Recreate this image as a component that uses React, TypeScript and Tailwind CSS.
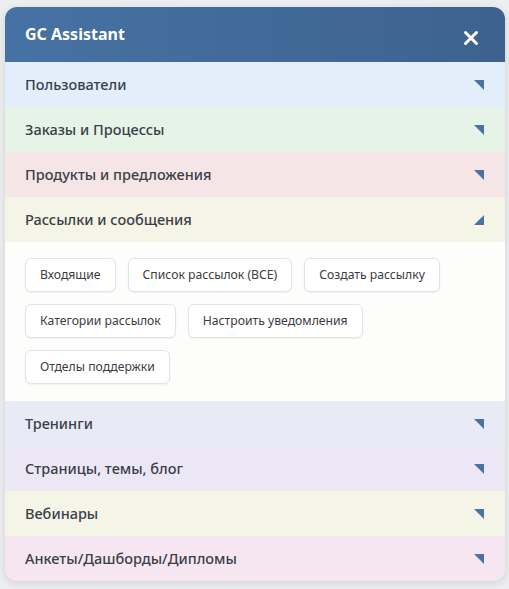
import React, { useState } from 'react';

const sections = [
  { title: 'Пользователи', bg: 'bg-[#e2effb]' },
  { title: 'Заказы и Процессы', bg: 'bg-[#e6f4e7]' },
  { title: 'Продукты и предложения', bg: 'bg-[#f5e5e6]' },
  {
    title: 'Рассылки и сообщения',
    bg: 'bg-[#f4f4e7]',
    items: [
      'Входящие',
      'Список рассылок (ВСЕ)',
      'Создать рассылку',
      'Категории рассылок',
      'Настроить уведомления',
      'Отделы поддержки',
    ],
  },
  { title: 'Тренинги', bg: 'bg-[#e8ebf5]' },
  { title: 'Страницы, темы, блог', bg: 'bg-[#ebe7f4]' },
  { title: 'Вебинары', bg: 'bg-[#f4f4e7]' },
  { title: 'Анкеты/Дашборды/Дипломы', bg: 'bg-[#f5e6f1]' },
];

const Arrow = ({ open }: { open: boolean }) => (
  <svg width="10" height="10" viewBox="0 0 10 10" className="shrink-0">
    {open ? <polygon points="10,0 10,10 0,10" fill="#4a72a6" /> : <polygon points="0,0 10,0 10,10" fill="#4a72a6" />}
  </svg>
);

const App = () => {
  const [openIdx, setOpenIdx] = useState<number | null>(3);

  return (
    <div className="min-h-screen bg-[#eceef0] pt-[7px] px-[5px] font-['Noto_Sans','Open_Sans',sans-serif]">
      <div className="w-[500px] rounded-xl overflow-hidden shadow-[0_2px_8px_rgba(0,0,0,0.12)]">
        {/* Header */}
        <div className="h-[55px] flex items-center justify-between pl-5 pr-[26px] bg-gradient-to-r from-[#4672a3] to-[#3d6290]">
          <span className="text-white font-bold text-[16px] -mt-[2px]">GC Assistant</span>
          <svg width="16" height="16" viewBox="0 0 16 16" className="mt-[7px]">
            <path d="M2.5 2.5 L13.5 13.5 M13.5 2.5 L2.5 13.5" stroke="white" strokeWidth="3" strokeLinecap="round" />
          </svg>
        </div>

        {sections.map((s, i) => (
          <div key={s.title}>
            <div
              className={`h-[45px] flex items-center justify-between pl-5 pr-[21px] cursor-pointer ${s.bg}`}
              onClick={() => setOpenIdx(openIdx === i ? null : i)}
            >
              <span className="text-[14.5px] text-[#3b3f4a] font-medium">{s.title}</span>
              <Arrow open={openIdx === i} />
            </div>
            {openIdx === i && s.items && (
              <div className="bg-[#fdfdfb] px-5 pt-4 pb-4 flex flex-wrap gap-x-3 gap-y-3 h-[159px] content-start">
                {s.items.map((it) => (
                  <button
                    key={it}
                    className="h-[34px] px-[14px] rounded-md bg-white border border-[#e3e4e6] shadow-[0_1px_2px_rgba(0,0,0,0.06)] text-[12.2px] text-[#3a3d44]"
                  >
                    {it}
                  </button>
                ))}
              </div>
            )}
          </div>
        ))}
      </div>
    </div>
  );
};

export default App;
